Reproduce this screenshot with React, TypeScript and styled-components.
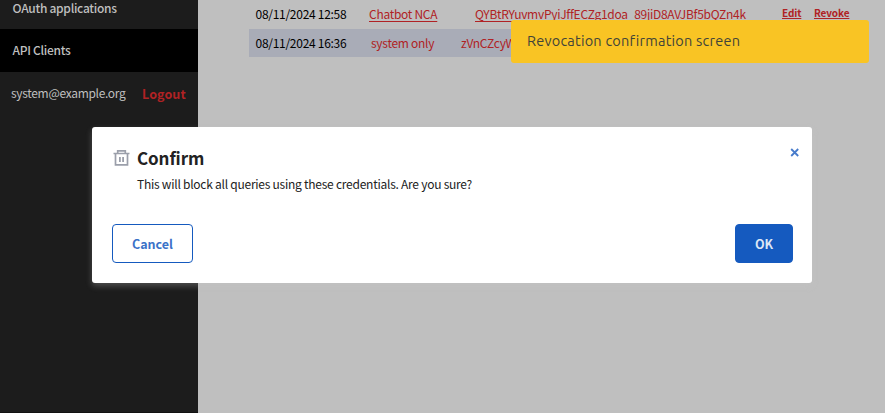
import React from "react";
import styled, { createGlobalStyle } from "styled-components";

const GlobalStyle = createGlobalStyle`
  * { box-sizing: border-box; }
  body { margin: 0; overflow: hidden; }
  button { font-family: inherit; padding: 0; cursor: pointer; }
`;

const Page = styled.div`
  display: flex;
  position: relative;
  width: 885px;
  height: 413px;
  overflow: hidden;
  background: #bfbfbf;
  font-family: "Noto Sans CJK SC", "Noto Sans", sans-serif;
  font-size: 12px;
  letter-spacing: -0.28px;
  color: #000;
`;

const Sidebar = styled.nav`
  flex: none;
  width: 198px;
  background: #1c1c1c;
  border-bottom: 1px solid #111;
`;

const NavItem = styled.div<{ $active?: boolean; $height: number }>`
  height: ${(p) => p.$height}px;
  padding: 0 0 ${(p) => (p.$active ? 12 : 11)}px 12.5px;
  display: flex;
  align-items: flex-end;
  line-height: 20px;
  font-weight: 500;
  color: #bfbfbf;
  background: ${(p) => (p.$active ? "#000" : "transparent")};
`;

const Account = styled.div`
  display: flex;
  align-items: center;
  height: 42px;
  padding-left: 11px;
`;

const Email = styled.span`
  width: 131px;
  padding-bottom: 1px;
  color: #bfbfbf;
  letter-spacing: -0.32px;
  white-space: nowrap;
`;

const Logout = styled.a`
  color: #b02224;
  font-size: 12.5px;
  font-weight: 700;
  letter-spacing: 0.1px;
`;

const Main = styled.main`
  flex: 1;
  padding-left: 51px;
`;

const Row = styled.div<{ $shaded?: boolean }>`
  display: grid;
  grid-template-columns: 108.5px 90px 328px 32px auto;
  width: 610px;
  height: ${(p) => (p.$shaded ? 28 : 29)}px;
  padding-left: 6.5px;
  line-height: 28px;
  white-space: nowrap;
  background: ${(p) => (p.$shaded ? "#a9acb7" : "transparent")};
`;

const Credential = styled.span<{ $linked?: boolean; $indent: number }>`
  padding-left: ${(p) => p.$indent}px;
  color: #b02224;
  span {
    text-decoration: ${(p) => (p.$linked ? "underline" : "none")};
    text-decoration-skip-ink: none;
    text-underline-offset: 2px;
    text-decoration-thickness: 1px;
  }
`;

const RowAction = styled.a`
  color: #b02224;
  font-size: 10px;
  line-height: 25px;
  font-weight: 700;
  letter-spacing: -0.1px;
  text-decoration: underline;
  text-underline-offset: 1px;
  text-decoration-thickness: 1px;
`;

const Banner = styled.div`
  position: absolute;
  left: 511px;
  top: 20px;
  width: 358px;
  height: 43px;
  padding-left: 16px;
  border-radius: 3px;
  background: #f9c424;
  color: #414339;
  font: 14.5px/42px Ubuntu, "Noto Sans", sans-serif;
  letter-spacing: 0.22px;
`;

const Dialog = styled.section`
  position: absolute;
  left: 92px;
  top: 127px;
  width: 720px;
  height: 156px;
  padding: 18px 19px 20px 20px;
  display: flex;
  flex-direction: column;
  justify-content: space-between;
  border-radius: 3px;
  background: #fff;
  box-shadow: 0 3px 6px rgba(200, 200, 200, 0.3);
`;

const DialogHead = styled.header`
  display: flex;
`;

const IconSlot = styled.div`
  width: 25px;
  padding: 4px 0 0 1px;
  line-height: 0;
`;

const DialogText = styled.div`
  flex: 1;
`;

const Title = styled.h2`
  margin: 0;
  font-size: 17px;
  font-weight: 700;
  line-height: 25px;
  letter-spacing: -0.1px;
  color: #222;
`;

const Message = styled.p`
  margin: 0;
  padding-top: 4px;
  line-height: 20px;
  font-size: 12px;
  letter-spacing: -0.25px;
  color: #222;
`;

const CloseButton = styled.button`
  width: 9px;
  height: 9px;
  margin: 3px -6px 0 0;
  border: 0;
  background: none;
  line-height: 0;
`;

const DialogFoot = styled.footer`
  display: flex;
  justify-content: space-between;
`;

const Button = styled.button<{ $primary?: boolean }>`
  width: ${(p) => (p.$primary ? 58 : 81)}px;
  height: 39px;
  border: 1px solid #155abf;
  border-radius: 4px;
  background: ${(p) => (p.$primary ? "#155abf" : "#fff")};
  color: ${(p) => (p.$primary ? "#dce6f5" : "#3b72c8")};
  font-size: 12.5px;
  font-weight: 700;
  letter-spacing: 0;
`;

const TrashIcon = () => (
  <svg width="17" height="18" viewBox="0 0 17 18" fill="none" stroke="#9b9faa">
    <path d="M.5 4.5h16M4.7 4.5V1.8h7.6v2.7" strokeWidth="1.7" />
    <path d="M2.5 4.5v11.3h12V4.5" strokeWidth="1.7" />
    <path d="M6.9 8v5M10.1 8v5" strokeWidth="1.8" />
  </svg>
);

const CloseIcon = () => (
  <svg width="9" height="9" viewBox="0 0 9 9" fill="none" stroke="#477bcb" strokeWidth="1.8">
    <path d="M1.2 1l7 7M8.2 1l-7 7" />
  </svg>
);

export default function App() {
  return (
    <Page>
      <GlobalStyle />
      <Sidebar>
        <NavItem $height={29}>OAuth applications</NavItem>
        <NavItem $height={43} $active>API Clients</NavItem>
        <Account>
          <Email>system@example.org</Email>
          <Logout>Logout</Logout>
        </Account>
      </Sidebar>
      <Main>
        <Row>
          <span>08/11/2024 12:58</span>
          <Credential $linked $indent={5}><span>Chatbot NCA</span></Credential>
          <Credential $linked $indent={21}><span>QYBtRYuvmvPyiJffECZg1doa_89jiD8AVJBf5bQZn4k</span></Credential>
          <RowAction>Edit</RowAction>
          <RowAction>Revoke</RowAction>
        </Row>
        <Row $shaded>
          <span>08/11/2024 16:36</span>
          <Credential $indent={7}><span>system only</span></Credential>
          <Credential $indent={7}><span>zVnCZcyW</span></Credential>
        </Row>
      </Main>
      <Banner>Revocation confirmation screen</Banner>
      <Dialog role="dialog" aria-label="Confirm">
        <DialogHead>
          <IconSlot><TrashIcon /></IconSlot>
          <DialogText>
            <Title>Confirm</Title>
            <Message>This will block all queries using these credentials. Are you sure?</Message>
          </DialogText>
          <CloseButton aria-label="Close"><CloseIcon /></CloseButton>
        </DialogHead>
        <DialogFoot>
          <Button>Cancel</Button>
          <Button $primary>OK</Button>
        </DialogFoot>
      </Dialog>
    </Page>
  );
}
